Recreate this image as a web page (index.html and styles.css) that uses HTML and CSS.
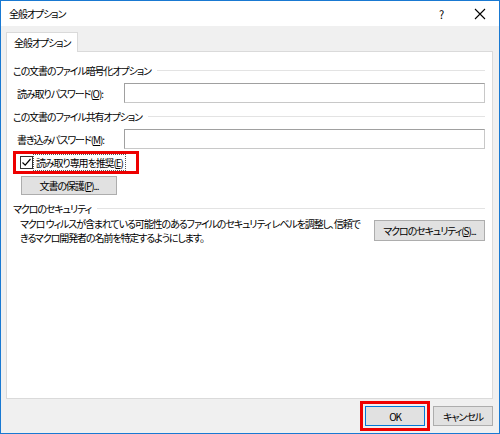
FILE: index.html
```html
<!DOCTYPE html>
<html lang="ja">
<head>
    <meta charset="UTF-8">
    <title>全般オプション</title>
    <link rel="stylesheet" href="styles.css">
</head>
<body>
    <div class="dialog">
        <div class="titlebar">
            <span class="title">全般オプション</span>
            <span class="title-btn help">?</span>
            <span class="title-btn close">
                <svg width="12" height="12" viewBox="0 0 12 12"><path d="M1 1L11 11M11 1L1 11" stroke="#000" stroke-width="1.1" fill="none"/></svg>
            </span>
        </div>

        <div class="tabs">
            <div class="tab">全般オプション</div>
        </div>

        <div class="panel">
            <div class="group-title"><span>この文書のファイル暗号化オプション</span></div>
            <div class="field">
                <label>読み取りパスワード(<u>O</u>):</label>
                <input class="text-input" type="password">
            </div>

            <div class="group-title"><span>この文書のファイル共有オプション</span></div>
            <div class="field">
                <label>書き込みパスワード(<u>M</u>):</label>
                <input class="text-input" type="password">
            </div>

            <div class="highlight check-highlight">
                <label class="check">
                    <span class="check-box">
                        <svg width="11" height="11" viewBox="0 0 11 11"><path d="M1.5 5.5L4.2 8.2L9.5 2" stroke="#000" stroke-width="1.2" fill="none"/></svg>
                    </span>
                    <span class="check-label">読み取り専用を推奨(<u>E</u>)</span>
                </label>
            </div>
            <div class="protect-row">
                <button class="btn protect-btn">文書の保護(<u>P</u>)...</button>
            </div>

            <div class="group-title macro-title"><span>マクロのセキュリティ</span></div>
            <div class="macro-row">
                <p class="macro-desc">マクロ ウィルスが含まれている可能性のあるファイルのセキュリティ レベルを調整し、信頼で<br>きるマクロ開発者の名前を特定するようにします。</p>
                <button class="btn macro-btn">マクロのセキュリティ(<u>S</u>)...</button>
            </div>
        </div>

        <div class="footer">
            <div class="highlight ok-highlight">
                <button class="btn btn-default">OK</button>
            </div>
            <button class="btn">キャンセル</button>
        </div>
    </div>
</body>
</html>
```

FILE: styles.css
```css
:root {
    --accent: #1979d2;
    --face: #f0f0f0;
    --line: #dadada;
    --btn-face: #e1e1e1;
    --btn-border: #adadad;
    --mark: #ee0000;
}

* {
    box-sizing: border-box;
    margin: 0;
    padding: 0;
}

body {
    font-family: "Noto Sans CJK JP", sans-serif;
    font-size: 10px;
    letter-spacing: -1.1px;
    font-feature-settings: "palt";
    color: #000;
    background: #fff;
    white-space: nowrap;
}

.dialog {
    width: 500px;
    height: 434px;
    border: 1px solid var(--accent);
    background: var(--face);
    display: flex;
    flex-direction: column;
}

.titlebar {
    height: 25px;
    background: #fff;
    display: flex;
    align-items: center;
    padding-left: 8px;
}

.title {
    flex: 1;
}

.title-btn {
    height: 25px;
    display: flex;
    align-items: center;
    justify-content: center;
    font-size: 11px;
}

.help {
    width: 40px;
}

.close {
    width: 38px;
}

.tabs {
    display: flex;
    padding: 6px 0 0 5px;
}

.tab {
    height: 20px;
    width: 72px;
    padding-left: 7px;
    background: #fff;
    border: 1px solid var(--line);
    border-bottom: none;
    line-height: 19px;
    margin-bottom: -1px;
    position: relative;
}

.panel {
    height: 348px;
    margin: 0 6px 0 5px;
    background: #fff;
    border: 1px solid var(--line);
    padding: 10px 7px 0 6px;
}

.group-title {
    display: flex;
    align-items: center;
    height: 16px;
}

.group-title::after {
    content: "";
    flex: 1;
    height: 1px;
    background: #e3e3e3;
    margin-left: 6px;
}

.field {
    display: flex;
    align-items: center;
    padding-left: 4px;
    margin: 5px 0 5px;
}

.field label {
    width: 107px;
}

.text-input {
    flex: 1;
    height: 20px;
    border: 1px solid #a0a0a0;
    border-right-color: #c8c8c8;
    border-bottom-color: #c8c8c8;
    outline: none;
}

.highlight {
    border: 3px solid var(--mark);
}

.check-highlight {
    display: inline-flex;
    width: 126px;
    height: 23px;
    align-items: center;
    padding-left: 4px;
    margin-top: -3px;
}

.check {
    display: flex;
    align-items: center;
    gap: 1px;
}

.check-box {
    width: 13px;
    height: 13px;
    border: 1px solid #333;
    background: #fff;
    display: flex;
    align-items: center;
    justify-content: center;
}

.check-label {
    outline: 1px dotted #555;
    padding: 0 2px;
    line-height: 15px;
}

.protect-row {
    padding-left: 8px;
    margin-top: 2px;
}

.btn {
    font: inherit;
    letter-spacing: inherit;
    font-feature-settings: "palt";
    background: var(--btn-face);
    border: 1px solid var(--btn-border);
    height: 20px;
    padding: 0;
    color: #000;
}

.protect-btn {
    width: 96px;
    height: 19px;
}

.macro-title {
    margin-top: 5px;
}

.macro-row {
    display: flex;
    align-items: flex-start;
    padding-left: 7px;
    margin-top: 1px;
}

.macro-desc {
    flex: 1;
    line-height: 14px;
}

.macro-btn {
    width: 111px;
    height: 21px;
    margin-top: 3px;
}

.footer {
    flex: 1;
    display: flex;
    justify-content: flex-end;
    align-items: center;
    gap: 3px;
    padding-right: 6px;
}

.ok-highlight {
    padding: 2px;
    display: flex;
}

.footer .btn {
    width: 60px;
    height: 20px;
}

.btn-default {
    border-color: #0078d7;
}
```
